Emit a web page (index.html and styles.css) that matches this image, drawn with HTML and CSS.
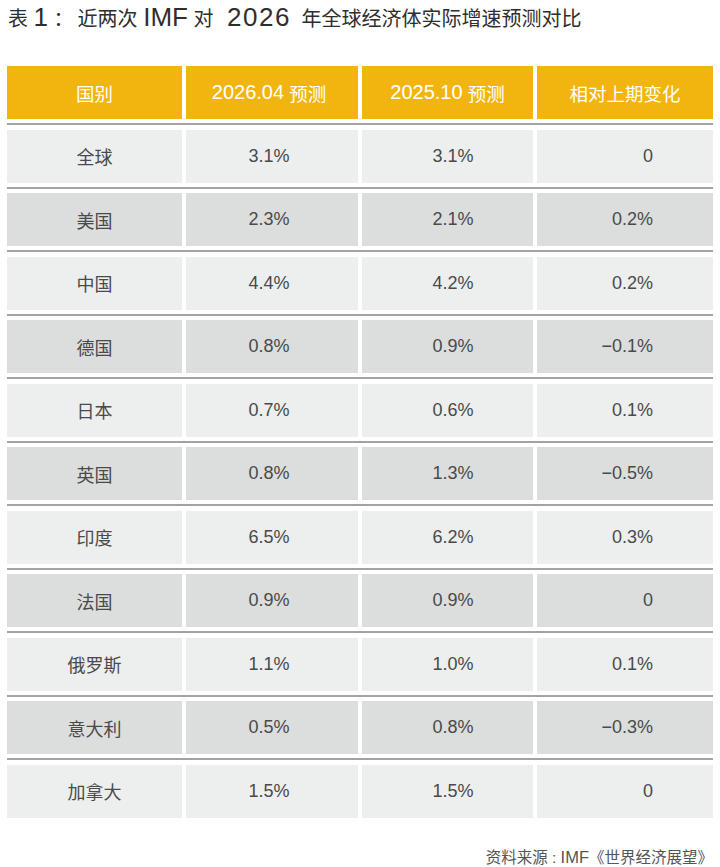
FILE: index.html
```html
<!DOCTYPE html>
<html lang="zh-CN">
<head>
<meta charset="utf-8">
<title>IMF 预测对比</title>
<link rel="stylesheet" href="styles.css">
</head>
<body>
<div class="page">
  <h1 class="title">表 <span class="lat">1</span> <span class="colon">：</span>近两次 <span class="lat">IMF</span> 对 <span class="lat num">2026</span> 年全球经济体实际增速预测对比</h1>
  <div class="table">
    <div class="row head">
      <div class="cell c1">国别</div>
      <div class="cell c2"><span class="hlat">2026.04</span>&nbsp;预测</div>
      <div class="cell c3h"><span class="hlat">2025.10</span>&nbsp;预测</div>
      <div class="cell c4h">相对上期变化</div>
    </div>
    <div class="group light"><div class="rule"></div><div class="row">
      <div class="cell c1">全球</div><div class="cell c2">3.1%</div><div class="cell c3">3.1%</div><div class="cell c4">0</div></div></div>
    <div class="group dark"><div class="rule"></div><div class="row">
      <div class="cell c1">美国</div><div class="cell c2">2.3%</div><div class="cell c3">2.1%</div><div class="cell c4">0.2%</div></div></div>
    <div class="group light"><div class="rule"></div><div class="row">
      <div class="cell c1">中国</div><div class="cell c2">4.4%</div><div class="cell c3">4.2%</div><div class="cell c4">0.2%</div></div></div>
    <div class="group dark"><div class="rule"></div><div class="row">
      <div class="cell c1">德国</div><div class="cell c2">0.8%</div><div class="cell c3">0.9%</div><div class="cell c4">−0.1%</div></div></div>
    <div class="group light"><div class="rule"></div><div class="row">
      <div class="cell c1">日本</div><div class="cell c2">0.7%</div><div class="cell c3">0.6%</div><div class="cell c4">0.1%</div></div></div>
    <div class="group dark"><div class="rule"></div><div class="row">
      <div class="cell c1">英国</div><div class="cell c2">0.8%</div><div class="cell c3">1.3%</div><div class="cell c4">−0.5%</div></div></div>
    <div class="group light"><div class="rule"></div><div class="row">
      <div class="cell c1">印度</div><div class="cell c2">6.5%</div><div class="cell c3">6.2%</div><div class="cell c4">0.3%</div></div></div>
    <div class="group dark"><div class="rule"></div><div class="row">
      <div class="cell c1">法国</div><div class="cell c2">0.9%</div><div class="cell c3">0.9%</div><div class="cell c4">0</div></div></div>
    <div class="group light"><div class="rule"></div><div class="row">
      <div class="cell c1">俄罗斯</div><div class="cell c2">1.1%</div><div class="cell c3">1.0%</div><div class="cell c4">0.1%</div></div></div>
    <div class="group dark"><div class="rule"></div><div class="row">
      <div class="cell c1">意大利</div><div class="cell c2">0.5%</div><div class="cell c3">0.8%</div><div class="cell c4">−0.3%</div></div></div>
    <div class="group light"><div class="rule"></div><div class="row">
      <div class="cell c1">加拿大</div><div class="cell c2">1.5%</div><div class="cell c3">1.5%</div><div class="cell c4">0</div></div></div>
  </div>
  <div class="source">资料来源 : <span class="slat">IMF</span>《世界经济展望》</div>
</div>
</body>
</html>
```
FILE: styles.css
```css
html, body {
  margin: 0;
  padding: 0;
  background: #ffffff;
}
.page {
  width: 720px;
  font-family: "Liberation Sans", "Noto Sans CJK SC", sans-serif;
  color: #4a4a4a;
}
.title {
  margin: 0 0 28px 0;
  padding-left: 8px;
  height: 38px;
  line-height: 38px;
  font-size: 20px;
  font-weight: normal;
  color: #2e2e2e;
  white-space: nowrap;
  overflow: hidden;
}
.title .lat {
  font-size: 26px;
  line-height: 1;
}
.title .colon {
  margin-right: 4px;
}
.title .num {
  letter-spacing: 1.5px;
  margin: 0 5px 0 8px;
}
.table {
  margin-left: 7px;
  width: 706px;
}
.row {
  display: grid;
  grid-template-columns: 175px 172px 171px 176px;
  column-gap: 4px;
}
.cell {
  height: 53px;
  display: flex;
  align-items: center;
  justify-content: center;
  font-size: 18px;
  white-space: nowrap;
}
.head .cell {
  background: #f2b50f;
  color: #ffffff;
  font-size: 18.5px;
}
.hlat {
  font-size: 20px;
}
.group {
  padding-top: 4px;
}
.rule {
  height: 2px;
  background: #a3a3a3;
  margin-bottom: 4.5px;
}
.light .cell {
  background: #edeeee;
}
.dark .cell {
  background: #dcdddd;
}
.c2 {
  padding-right: 6px;
}
.c3 {
  padding-left: 11px;
}
.c4 {
  justify-content: flex-end;
  padding-right: 60px;
}
.c4h {
  padding: 0;
}
.source {
  margin-top: 29px;
  padding-right: 7px;
  text-align: right;
  font-size: 15.5px;
  line-height: 20px;
  color: #555555;
}
.slat {
  font-size: 16.5px;
}
```
